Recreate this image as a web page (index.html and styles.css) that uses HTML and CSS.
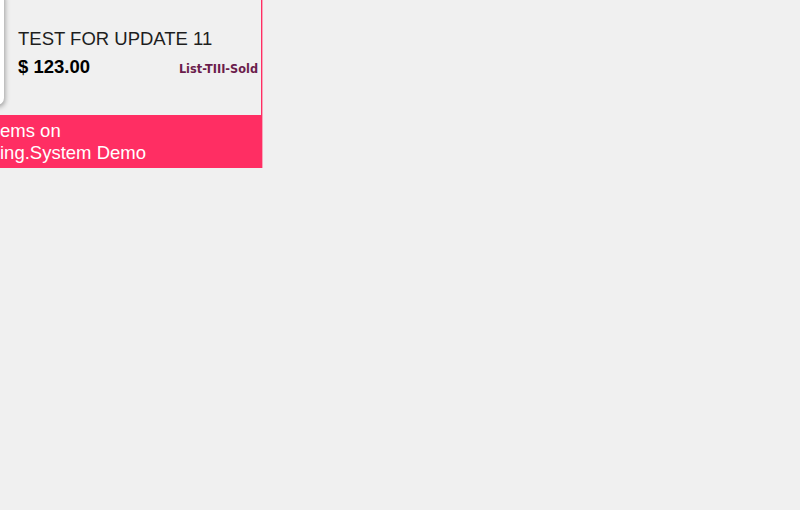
FILE: index.html
```html
<!DOCTYPE html>
<html>
<head>
<meta charset="utf-8">
<link rel="stylesheet" href="styles.css">
</head>
<body>
<div class="card">
  <div class="row">
    <div class="thumb"></div>
    <div class="info">
      <div class="title">TEST FOR UPDATE 11</div>
      <div class="price-row">
        <span class="price">$ 123.00</span>
        <span class="status">List-TIII-Sold</span>
      </div>
    </div>
  </div>
  <div class="bar">ems on<br>ing.System Demo</div>
</div>
</body>
</html>
```
FILE: styles.css
```css
html, body {
  margin: 0;
  padding: 0;
  background: #f0f0f0;
}
body {
  font-family: "Liberation Sans", Arial, sans-serif;
}
.card {
  width: 261px;
  margin-top: -10px;
  border-right: 1px solid #ff2e63;
  box-shadow: 1px 0 0 #f7a6ba;
  background: #f0f0f0;
}
.row {
  display: flex;
  height: 125px;
}
.thumb {
  flex: none;
  width: 104px;
  height: 115px;
  margin-left: -100px;
  background: #ffffff;
  border-radius: 7px;
  box-shadow: 1px 2px 5px rgba(0, 0, 0, 0.35);
}
.info {
  flex: 1;
  margin-left: 14px;
  padding-top: 35px;
  padding-right: 3px;
}
.title {
  font-size: 18.5px;
  line-height: 28px;
  color: #1e1e1e;
}
.price-row {
  display: flex;
  justify-content: space-between;
  align-items: baseline;
  line-height: 28px;
}
.price {
  font-size: 18.5px;
  font-weight: bold;
  color: #000;
}
.status {
  font-family: "DejaVu Sans Condensed", "DejaVu Sans", sans-serif;
  font-stretch: condensed;
  font-size: 12.6px;
  font-weight: bold;
  color: #6b1d4c;
}
.bar {
  background: #ff2e63;
  color: #ffffff;
  font-size: 18.5px;
  line-height: 22px;
  padding: 5px 0 4px 0;
}
```
